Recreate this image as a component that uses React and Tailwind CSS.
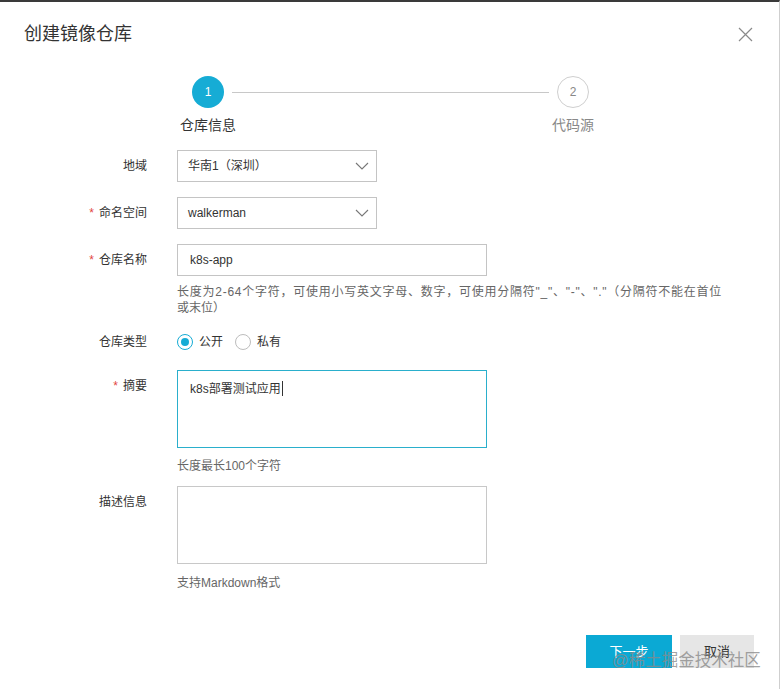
import React from "react";

const FONT = { fontFamily: '"Liberation Sans", "Noto Sans CJK SC", sans-serif' };

function Chevron() {
  return (
    <svg width="14" height="8" viewBox="0 0 14 8" className="shrink-0">
      <path d="M1 1 L7 7 L13 1" fill="none" stroke="#777" strokeWidth="1.1" />
    </svg>
  );
}

function Label({ required, children, top }) {
  return (
    <div className={`w-[147px] shrink-0 text-right text-[12px] leading-8 text-[#333] ${top ? "self-start" : ""}`}>
      {required && <span className="text-[#e2463f] mr-[5px]">*</span>}
      {children}
    </div>
  );
}

function Select({ value }) {
  return (
    <div className="ml-[30px] flex h-8 w-[200px] items-center justify-between border border-[#c4c4c4] bg-white pl-[10px] pr-[7px] text-[12px] text-[#333]">
      <span>{value}</span>
      <Chevron />
    </div>
  );
}

export default function App() {
  return (
    <div className="relative h-[689px] w-[781px] overflow-hidden bg-white" style={FONT}>
      <div className="h-[689px] w-[780px] border-t-2 border-r border-t-[#3a3a3a] border-r-[#cfcfcf] bg-white">
        {/* Header */}
        <div className="flex items-center justify-between pl-6 pr-[26px] pt-5">
          <div className="text-[18px] leading-6 text-[#333]">创建镜像仓库</div>
          <svg width="15" height="15" viewBox="0 0 15 15">
            <path d="M1 1 L14 14 M14 1 L1 14" stroke="#8a8a8a" strokeWidth="1.2" fill="none" />
          </svg>
        </div>

        {/* Steps */}
        <div className="mt-[30px]">
          <div className="flex items-center">
            <div className="ml-[192px] flex h-8 w-8 items-center justify-center rounded-full bg-[#16acd5] text-[12px] text-white">1</div>
            <div className="mx-2 h-px w-[317px] bg-[#c8c8c8]" />
            <div className="flex h-8 w-8 items-center justify-center rounded-full border border-[#cfcfcf] text-[12px] text-[#888]">2</div>
          </div>
          <div className="mt-[7px] flex text-[14px] leading-5">
            <div className="ml-[176px] w-16 text-center text-[#333]">仓库信息</div>
            <div className="ml-[301px] w-16 text-center text-[#888]">代码源</div>
          </div>
        </div>

        {/* Form */}
        <div className="mt-[15px]">
          <div className="flex items-center">
            <Label>地域</Label>
            <Select value="华南1（深圳）" />
          </div>
          <div className="mt-[15px] flex items-center">
            <Label required>命名空间</Label>
            <Select value="walkerman" />
          </div>
          <div className="mt-[15px] flex items-center">
            <Label required>仓库名称</Label>
            <div className="ml-[30px] flex h-8 w-[310px] items-center border border-[#c4c4c4] pl-[12px] text-[12px] text-[#333]">k8s-app</div>
          </div>
          <div className="ml-[177px] mt-2 text-[12px] leading-4 text-[#666]">
            <span className="tracking-[0.75px]">
              长度为2-64个字符，可使用小写英文字母、数字，可使用分隔符"_"、"-"、"."（分隔符不能在首位
            </span>
            <br />
            或末位）
          </div>

          <div className="mt-[10px] flex items-center">
            <Label>仓库类型</Label>
            <div className="ml-[30px] flex items-center text-[12px] text-[#333]">
              <span className="flex h-4 w-4 items-center justify-center rounded-full border border-[#16acd5]">
                <span className="h-2 w-2 rounded-full bg-[#16acd5]" />
              </span>
              <span className="ml-[6px]">公开</span>
              <span className="ml-[12px] h-4 w-4 rounded-full border border-[#bdbdbd]" />
              <span className="ml-[6px]">私有</span>
            </div>
          </div>

          <div className="mt-3 flex">
            <Label required top>摘要</Label>
            <div className="ml-[30px] h-[78px] w-[310px] border border-[#2aafcc] pl-[12px] pt-[7px] text-[12px] leading-4 text-[#333]">
              k8s部署测试应用<span className="ml-px inline-block h-[15px] w-px translate-y-[3px] bg-[#333]" />
            </div>
          </div>
          <div className="ml-[177px] mt-[10px] text-[12px] leading-4 text-[#666]">长度最长100个字符</div>

          <div className="mt-3 flex">
            <Label top>描述信息</Label>
            <div className="ml-[30px] h-[78px] w-[310px] border border-[#c8c8c8]" />
          </div>
          <div className="ml-[177px] mt-[11px] text-[12px] leading-4 text-[#666]">支持Markdown格式</div>
        </div>

        {/* Footer */}
        <div className="mt-[44px] flex justify-end pr-[25px]">
          <button className="h-[33px] w-[86px] bg-[#0ba9d4] text-[13px] text-white">下一步</button>
          <button className="ml-2 h-[33px] w-[74px] bg-[#e6e6e6] text-[13px] text-[#333]">取消</button>
        </div>
      </div>

      {/* watermark */}
      <div className="pointer-events-none absolute left-[612px] top-[650px] text-[16.5px] leading-5 text-[#8a8a8a]/80">
        @稀土掘金技术社区
      </div>
    </div>
  );
}
